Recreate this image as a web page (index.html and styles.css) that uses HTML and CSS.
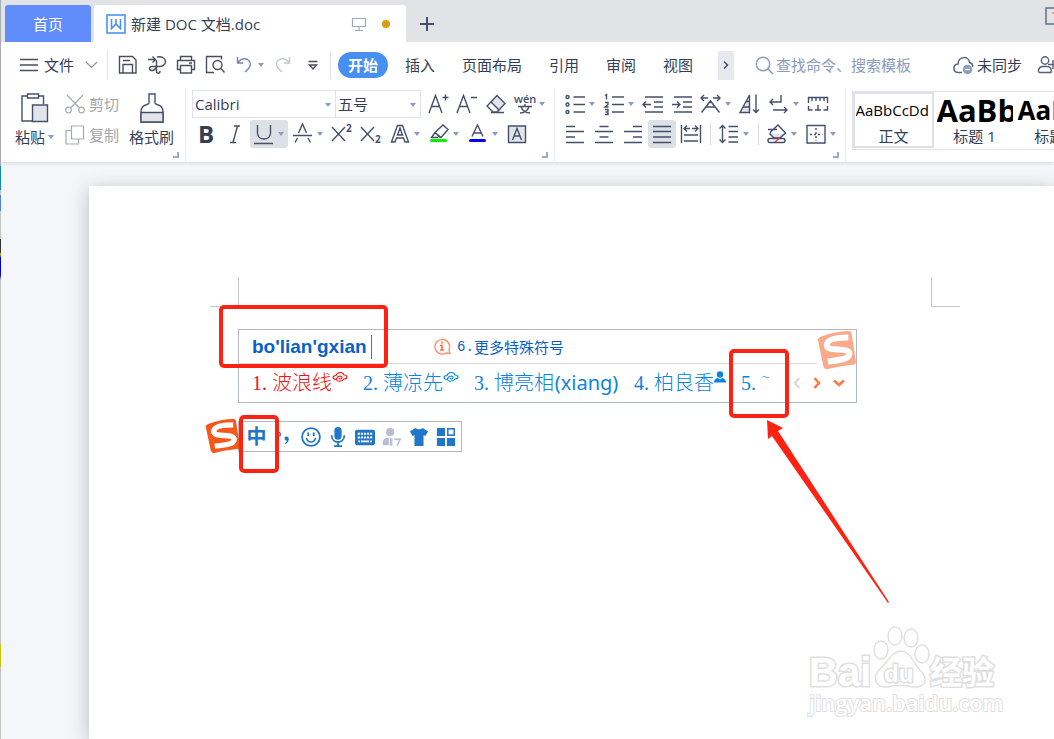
FILE: index.html
```html
<!DOCTYPE html>
<html lang="zh-CN">
<head>
    <meta charset="UTF-8">
    <meta name="viewport" content="width=device-width, initial-scale=1.0">
    <title>新建 DOC 文档.doc</title>
    <link rel="stylesheet" href="styles.css">
</head>
<body>
    <div class="window">
        <div class="desktop-edge"></div>

        <!-- document tabs -->
        <header class="tab-bar">
            <button class="home-tab">首页</button>
            <div class="doc-tab">
                <svg class="doc-logo" width="20" height="20" viewBox="0 0 20 20"><rect x="1" y="1" width="18" height="18" fill="#fff" stroke="#4b93f0" stroke-width="1.6"/><path d="M5.500 5v9.500L10 10l4.500 4.500V5M10 5v5" fill="none" stroke="#4b93f0" stroke-width="1.6"/></svg>
                <span class="doc-name">新建 DOC 文档.doc</span>
                <svg class="monitor" width="16" height="16" viewBox="0 0 16 16"><path d="M1.500 2.500h13v8h-13zM8 11v3M4 14.500h8" fill="none" stroke="#9aa9c4" stroke-width="1.2"/></svg>
                <span class="unsaved-dot"></span>
            </div>
            <button class="new-tab" aria-label="新建"><svg width="16" height="16" viewBox="0 0 16 16"><path d="M8 1v14M1 8h14" stroke="#44506b" stroke-width="2"/></svg></button>
            <button class="layout-button" aria-label="布局"><svg width="18" height="18" viewBox="0 0 18 18"><rect x="1" y="1" width="16" height="16" fill="none" stroke="#5a6782" stroke-width="1.4"/><path d="M7 6h5v6" fill="none" stroke="#e8926a" stroke-width="1.4"/></svg></button>
        </header>

        <!-- menu -->
        <nav class="menu-bar">
            <button class="file-menu">
                <svg width="19" height="14" viewBox="0 0 19 14"><path d="M0 1.500h18M0 7h18M0 12.500h18" stroke="#4a4f5c" stroke-width="1.3"/></svg>
                <span>文件</span>
                <svg width="13" height="8" viewBox="0 0 13 8"><path d="M1 1l5.500 5.500L12 1" fill="none" stroke="#8d929c" stroke-width="1.2"/></svg>
            </button>
            <div class="quick-access">
                <button class="tool dark" aria-label="保存"><svg viewBox="0 0 28 28"><path d="M5.500 5.500h13l3.500 3.500v13h-16.500zM9 22v-8.500h9.500V22M9 9.500h7"/></svg></button>
                <button class="tool dark" aria-label="输出为PDF"><svg viewBox="0 0 28 28"><path d="M5 8.500h7.500M9.500 5.500l3 3-3 3M14 6c5-1 8.500 1.500 8.500 4.500S19 16 15.500 15.500h-6c-4 0-4 4-.5 4 2 0 3-1 4-2.500M13.500 9v11c0 3 3.500 3 3.500 0"/></svg></button>
                <button class="tool dark" aria-label="打印"><svg viewBox="0 0 28 28"><path d="M8.500 9.500V5.500h11v4M8.500 18.500h-3v-9h17v9h-3M8.500 14.500h11v7.500h-11zM17 12h3"/></svg></button>
                <button class="tool dark" aria-label="打印预览"><svg viewBox="0 0 28 28"><path d="M13 21.500H5.500V5.500h15v3M20 17.500l3.500 4"/><circle cx="16.500" cy="14" r="4.500"/></svg></button>
                <button class="tool with-caret blue" aria-label="撤消"><svg viewBox="0 0 28 28"><path d="M7.500 6v6H13M7.500 12c3-4 7-5 10-3.500 5 3 3 8.500-2.500 12.500"/></svg></button>
                <button class="tool faded" aria-label="恢复"><svg viewBox="0 0 28 28"><path d="M20.500 6v6H15M20.500 12c-3-4-7-5-10-3.500-5 3-3 8.500 2.500 12.500"/></svg></button>
                <button class="tool dark" aria-label="更多"><svg viewBox="0 0 28 28"><path d="M10.500 10.500h9M11.500 14h7L15 18z"/></svg></button>
            </div>
            <div class="menu-tabs">
                <a class="menu-tab active" href="#">开始</a>
                <a class="menu-tab" href="#">插入</a>
                <a class="menu-tab" href="#">页面布局</a>
                <a class="menu-tab" href="#">引用</a>
                <a class="menu-tab" href="#">审阅</a>
                <a class="menu-tab" href="#">视图</a>
            </div>
            <button class="scroll-tabs" aria-label="更多选项卡"><svg width="6" height="10" viewBox="0 0 6 10"><path d="M1 1.500L4.500 5 1 8.500" fill="none" stroke="#44506b" stroke-width="1.5"/></svg></button>
            <label class="search">
                <svg width="19" height="19" viewBox="0 0 19 19"><path d="M13 13l5 5" stroke="#8a9bbd" stroke-width="1.4"/><circle cx="8" cy="8" r="6.700" fill="none" stroke="#8a9bbd" stroke-width="1.4"/></svg>
                <input type="text" placeholder="查找命令、搜索模板" aria-label="查找命令">
            </label>
            <button class="sync">
                <svg width="21" height="19" viewBox="0 0 21 19"><path d="M9 16.500H5C-.5 16-.5 8.500 5 8 5.500-.5 16 0 16.500 6.500c2.500.8 3.500 2.500 3 4.500" fill="none" stroke="#55617b" stroke-width="1.5"/><circle cx="14.500" cy="13.500" r="4.700" fill="#8a9bbd"/><path d="M12 13.500h5" stroke="#fff" stroke-width="1.3"/></svg>
                <span>未同步</span>
            </button>
            <button class="share" aria-label="协作"><svg width="22" height="18" viewBox="0 0 22 18"><circle cx="8" cy="4.500" r="3.700"/><path d="M14 16.500H2.500c-2-1-1-6 3.500-6h4c3 0 5 2 4 6zM11 8.500h10M16 4v9"/></svg></button>
        </nav>

        <!-- ribbon -->
        <section class="ribbon">
            <div class="group clipboard">
                <button class="big-tool">
                    <svg width="28" height="30" viewBox="0 0 28 30"><path d="M6.500 3H1v25h10M18 3h4.500v8M6.500 1h11v4h-11z"/><path class="shade" d="M11.500 12h15v16.500h-15z"/></svg>
                    <span class="caret-label">粘贴</span>
                </button>
                <div class="small-tools">
                    <button class="small-tool">
                        <svg width="20" height="20" viewBox="0 0 20 20"><circle cx="3.500" cy="16" r="2.800"/><circle cx="16.500" cy="16" r="2.800"/><path d="M2 1l12.500 13M18 1L5.500 14"/></svg>
                        <span>剪切</span>
                    </button>
                    <button class="small-tool">
                        <svg width="20" height="20" viewBox="0 0 20 20"><path d="M6.500 1h12v13h-12z"/><path d="M6 5.500H1V19h12.500v-5" fill="none"/></svg>
                        <span>复制</span>
                    </button>
                </div>
                <button class="big-tool">
                    <svg width="24" height="30" viewBox="0 0 24 30"><path d="M9 1h6v9c1 3 7 0 8 8v11H1V18c1-8 7-5 8-8z"/><path class="shade" d="M1 19.500h22V29H1z"/></svg>
                    <span>格式刷</span>
                </button>
                <span class="launcher"></span>
            </div>

            <div class="group font-group">
                <div class="tool-row">
                    <span class="combo font-name"><select aria-label="字体"><option>Calibri</option></select></span>
                    <span class="combo font-size"><select aria-label="字号"><option>五号</option></select></span>
                    <button class="tool" aria-label="增大字号"><svg viewBox="0 0 28 28"><path d="M5 23L11.500 5.500 18 23M7.500 16.500h8M18.500 7.500h6M21.500 4.500v6"/></svg></button>
                    <button class="tool" aria-label="减小字号"><svg viewBox="0 0 28 28"><path d="M4 23L10.500 5.500 17 23M6.500 16.500h8M18 7.500h6"/></svg></button>
                    <button class="tool" aria-label="清除格式"><svg viewBox="0 0 28 28"><path class="shade" d="M9 12l6-6.500 8 8-6 6.500z"/><path d="M9 12l-4 4 6 6h4l2-2M9 22.500h13"/></svg></button>
                    <button class="tool with-caret" aria-label="拼音指南"><svg viewBox="0 0 28 28"><text x="3" y="13" class="pinyin-text">wén</text><path d="M7 16.500h14M14 14v2.500M9 23c4 0 8-2.500 9-6.500M10 16.500c1 4 5 6.500 9 6.500"/></svg></button>
                </div>
                <div class="tool-row">
                    <button class="tool bold" aria-label="加粗">B</button>
                    <button class="tool" aria-label="倾斜"><svg viewBox="0 0 28 28"><path d="M13 6h6M9 22.500h6M16.500 6L12 22.500"/></svg></button>
                    <button class="tool with-caret pressed" aria-label="下划线"><svg viewBox="0 0 28 28"><path d="M7.500 5v8c0 8 13 8 13 0V5M4 23.500h19"/></svg></button>
                    <button class="tool with-caret" aria-label="删除线"><svg viewBox="0 0 28 28"><path d="M9.500 13L13.500 4l4 9M4 15.500h19M8.500 18L6 22.500M19 18l2.500 4.500"/></svg></button>
                    <button class="tool" aria-label="上标"><svg viewBox="0 0 28 28"><path d="M4 7l13 14M17 7L4 21"/><text x="18" y="12" class="index-text">2</text></svg></button>
                    <button class="tool" aria-label="下标"><svg viewBox="0 0 28 28"><path d="M4 7l13 14M17 7L4 21"/><text x="18" y="23" class="index-text">2</text></svg></button>
                    <button class="tool with-caret" aria-label="文字效果"><svg viewBox="0 0 28 28"><path d="M5.500 22l6-16.500h5l6 16.500h-3.500l-1.500-4h-7l-1.500 4zM11.500 15h5L14 8z"/></svg></button>
                    <button class="tool with-caret" aria-label="突出显示"><svg viewBox="0 0 28 28"><path d="M10 12.500L18 5l5 4.500-7 8zM10 12.500l-3.500 5h6.500M10 12.500l5 5"/><path d="M6.500 20.500h14" stroke="#00f000" stroke-width="3" stroke-linecap="round"/></svg></button>
                    <button class="tool with-caret" aria-label="字体颜色"><svg viewBox="0 0 28 28"><path d="M8 16.500L13.500 5 19 16.500M10 13h7"/><path d="M6.500 20.500h14" stroke="#0000ff" stroke-width="3" stroke-linecap="round"/></svg></button>
                    <button class="tool" aria-label="字符底纹"><svg viewBox="0 0 28 28"><path class="shade" d="M5.500 6h17v16.500h-17z"/><path d="M9.500 20l4.500-11.500L18.500 20M11 16h6"/></svg></button>
                </div>
                <span class="launcher"></span>
            </div>

            <div class="group paragraph-group">
                <div class="tool-row">
                    <button class="tool with-caret" aria-label="项目符号"><svg viewBox="0 0 28 28"><path d="M12.500 7H24M12.500 14.500H24M12.500 22H24"/><circle cx="6.500" cy="7" r="1.500"/><circle cx="6.500" cy="14.500" r="1.500"/><circle cx="6.500" cy="22" r="1.500"/></svg></button>
                    <button class="tool with-caret" aria-label="编号"><svg viewBox="0 0 28 28"><path d="M12 7h12M12 14.500h12M12 22h12M5 5.500l1.500-1v5M5 12.500h3v2L5 17h3.500M5 19.500h3v5H5M5.500 22H8"/></svg></button>
                    <button class="tool" aria-label="减少缩进"><svg viewBox="0 0 28 28"><path d="M6 7h18M15 12h9M15 17h9M6 22h18M12 14.500H4M7 11.500l-3 3 3 3"/></svg></button>
                    <button class="tool" aria-label="增加缩进"><svg viewBox="0 0 28 28"><path d="M6 7h18M15 12h9M15 17h9M6 22h18M4 14.500h8M9 11.500l3 3-3 3"/></svg></button>
                    <button class="tool with-caret" aria-label="中文版式"><svg viewBox="0 0 28 28"><path d="M4 8h7M7 5L4 8l3 3M16 8h7M20 5l3 3-3 3M4.500 22.500L13.500 11l9 11.500M9.500 17h8"/></svg></button>
                    <button class="tool" aria-label="排序"><svg viewBox="0 0 28 28"><path class="shade" d="M4 22.500L13.500 5v17.500z"/><path d="M10 11.500h3.500M7 17h6.500M20 4.500v18M17 19.500l3 3 3-3"/></svg></button>
                    <button class="tool with-caret" aria-label="显示段落标记"><svg viewBox="0 0 28 28"><path d="M16 5v7H5M8 9l-3 3 3 3M8 20h14M19 17l3 3-3 3"/></svg></button>
                    <button class="tool" aria-label="标尺"><svg viewBox="0 0 28 28"><path d="M4.500 13V7.500h19V13M8 8v3M12 8v3M16 8v3M20 8v3M4.500 16v4h4M23.500 16v4h-4M14 15v5M11 20h6"/></svg></button>
                </div>
                <div class="tool-row">
                    <button class="tool" aria-label="左对齐"><svg viewBox="0 0 28 28"><path d="M5 6.500h9M5 11.500h18M5 17h9M5 22.500h18"/></svg></button>
                    <button class="tool" aria-label="居中"><svg viewBox="0 0 28 28"><path d="M9.500 6.500h9M5 11.500h18M9.500 17h9M5 22.500h18"/></svg></button>
                    <button class="tool" aria-label="右对齐"><svg viewBox="0 0 28 28"><path d="M14 6.500h9M5 11.500h18M14 17h9M5 22.500h18"/></svg></button>
                    <button class="tool pressed" aria-label="两端对齐"><svg viewBox="0 0 28 28"><path d="M5 6.500h18M5 11.500h18M5 17h18M5 22.500h18"/></svg></button>
                    <button class="tool" aria-label="分散对齐"><svg viewBox="0 0 28 28"><path d="M4.500 5v18M23.500 5v18M7 15h14M7 21h14M7.500 8.500H13M10 5.500l-3 3 3 3M15 8.500h6M18 5.500l3 3-3 3"/></svg></button>
                    <span class="divider"></span>
                    <button class="tool with-caret" aria-label="行距"><svg viewBox="0 0 28 28"><path d="M7.500 5.500v17M4.500 8.500l3-3 3 3M4.500 19.500l3 3 3-3M13.500 6.500H23M13.500 11.500H23M13.500 17H23M13.500 22H23"/></svg></button>
                    <span class="divider"></span>
                    <button class="tool with-caret" aria-label="底纹颜色"><svg viewBox="0 0 28 28"><path class="shade" d="M8 14h14l-5 4h-6z" stroke="none"/><path d="M5 9.500h9M8 11.500L15 5l7.500 8-5.500 5h-6l-4-4z"/><rect x="5" y="18.500" width="17" height="4" rx="2" fill="#fff"/><path d="M12 22l4-3.500" stroke="#e33"/></svg></button>
                    <button class="tool with-caret" aria-label="边框"><svg viewBox="0 0 28 28"><path d="M5 5.500h18v17.500H5z"/><path d="M14 8v12.500M8 14.500h12.500" stroke-dasharray="2 2"/></svg></button>
                </div>
                <span class="launcher"></span>
            </div>

            <div class="styles-gallery">
                <button class="style-card selected"><span class="sample">AaBbCcDd</span><span>正文</span></button>
                <button class="style-card"><span class="sample heading-one">AaBb</span><span>标题 1</span></button>
                <button class="style-card"><span class="sample heading-two">AaBb</span><span>标题 2</span></button>
            </div>
        </section>

        <!-- document area -->
        <main class="workspace">
            <div class="page">
                <span class="crop-mark crop-left"></span>
                <span class="crop-mark crop-right"></span>

                <div class="ime-window">
                    <div class="ime-input">
                        <span class="pinyin">bo'lian'gxian</span>
                        <button class="more-symbols">
                            <svg width="18" height="17" viewBox="0 0 18 17"><path d="M13 15a7.300 7.300 0 1 1 3-3.500l1 4z" fill="none" stroke="#ff8a66" stroke-width="1.300"/><path d="M9 3.500v2M7 7.500h2v4.500M7 12h4" fill="none" stroke="#ff7043" stroke-width="1.700"/></svg>
                            <span class="num">6.</span><span>更多特殊符号</span>
                        </button>
                    </div>
                    <div class="candidates">
                        <button class="candidate first"><span class="num">1.</span>波浪线<svg class="mark" width="16" height="12" viewBox="0 0 16 12"><path d="M4 8.500C0 8 0 5 4 4.500 5 .5 11 .5 12 4c4 0 4 4 0 4-2 3-7 3-7.500.5C4.500 5 10 4 10 6.500c0 2-3 2-3 .5"/></svg></button>
                        <button class="candidate"><span class="num">2.</span>薄凉先<svg class="mark" width="16" height="12" viewBox="0 0 16 12"><path d="M4 8.500C0 8 0 5 4 4.500 5 .5 11 .5 12 4c4 0 4 4 0 4-2 3-7 3-7.500.5C4.500 5 10 4 10 6.500c0 2-3 2-3 .5"/></svg></button>
                        <button class="candidate"><span class="num">3.</span>博亮相<span class="reading">(xiang)</span></button>
                        <button class="candidate"><span class="num">4.</span>柏良香<svg class="mark person" width="12" height="12" viewBox="0 0 12 12"><circle cx="6" cy="3.500" r="3.200"/><path d="M0 11.500c0-4 3-4 4-4.500l2 1.500L8 7c1 .5 4 .5 4 4.500z"/></svg></button>
                        <button class="candidate"><span class="num">5.</span><span class="tilde">~</span></button>
                        <div class="pager">
                            <svg width="8" height="12" viewBox="0 0 8 12"><path d="M6.500 1L2 6l4.500 5" stroke="#dcdcdc"/></svg>
                            <svg width="8" height="12" viewBox="0 0 8 12"><path d="M1.500 1L6 6l-4.500 5" stroke="#ff7a45"/></svg>
                            <svg width="12" height="8" viewBox="0 0 12 8"><path d="M1 1.500L6 6l5-4.500" stroke="#ff7a45"/></svg>
                        </div>
                    </div>
                    <svg class="sogou-logo faded-logo" viewBox="0 0 36 36"><path d="M4 6C12 3 21 1 29 1c2 0 3 1 3 3l4 25c0 2-1 3-3 3-8 1-15 2-23 4-2 0-3 0-4-2L1 10c-1-2 1-3 3-4z" fill="#f4581a"/><path d="M29 7c-9 0-20 1-20 7 0 7 21 1 21 8 0 5-10 6-20 7" fill="none" stroke="#fff" stroke-width="5.500"/></svg>
                </div>

                <div class="ime-bar">
                    <svg class="sogou-logo bar-logo" viewBox="0 0 36 36"><path d="M4 6C12 3 21 1 29 1c2 0 3 1 3 3l4 25c0 2-1 3-3 3-8 1-15 2-23 4-2 0-3 0-4-2L1 10c-1-2 1-3 3-4z" fill="#f4581a"/><path d="M29 7c-9 0-20 1-20 7 0 7 21 1 21 8 0 5-10 6-20 7" fill="none" stroke="#fff" stroke-width="5.500"/></svg>
                    <button class="ime-tool ime-mode">中</button>
                    <button class="ime-tool" aria-label="标点"><svg viewBox="0 0 22 22"><circle cx="5" cy="8" r="2" fill="none" stroke="#2077c9" stroke-width="1.500"/><path d="M12 11c4-2 7 3 1 8l-1-1c2-2 2-3 2-3-2 0-3-2-2-4z"/></svg></button>
                    <button class="ime-tool" aria-label="表情"><svg viewBox="0 0 22 22"><circle cx="11" cy="11" r="9.800" fill="none" stroke="#2077c9" stroke-width="2"/><path d="M7 6h2v4H7zM13 6h2v4h-2z"/><path d="M6 12c1 6 9 6 10 0" fill="none" stroke="#2077c9" stroke-width="1.700"/></svg></button>
                    <button class="ime-tool" aria-label="语音"><svg viewBox="0 0 22 22"><rect x="7" y="0" width="8" height="14" rx="4"/><path d="M4 9c0 10 14 10 14 0M11 17v4M6.500 21h9" fill="none" stroke="#2077c9" stroke-width="2"/></svg></button>
                    <button class="ime-tool" aria-label="软键盘"><svg viewBox="0 0 22 22"><rect x="0" y="3" width="22" height="17" rx="2"/><path d="M3 7.500h16M3 11.500h16" stroke="#fff" stroke-width="2.200" stroke-dasharray="2.400 1"/><path d="M3.500 15.800h15" stroke="#fff" stroke-width="2" stroke-dasharray="2 1 9 1"/></svg></button>
                    <button class="ime-tool muted" aria-label="登录"><svg viewBox="0 0 22 22"><circle cx="9" cy="5.500" r="4.500"/><path d="M1 20c-1-7 2-9 9-8v8z"/><path d="M8 12h4v9H8zM13 12h9l-4 9h-3l3-6h-5z" stroke="#fff" stroke-width="1"/></svg></button>
                    <button class="ime-tool" aria-label="皮肤"><svg viewBox="0 0 22 22"><path d="M7 1c2 2 6 2 8 0l6 4-3 5-2-1v12H6V9l-2 1-3-5z"/></svg></button>
                    <button class="ime-tool" aria-label="工具箱"><svg viewBox="0 0 22 22"><path d="M1 1h9v9H1zM1 12h9v9H1zM12 12h9v9h-9z"/><rect x="13" y="2" width="7" height="7" fill="none" stroke="#2077c9" stroke-width="1.700"/></svg></button>
                </div>

                <!-- highlights over the input method -->
                <span class="highlight highlight-input"></span>
                <span class="highlight highlight-candidate"></span>
                <span class="highlight highlight-mode"></span>
                <svg class="arrow" width="126" height="186" viewBox="0 0 126 186"><path d="M1 1l16 8-5 3 111 171-1 1L6 17l-4 3z" fill="#ff2212"/></svg>

                <svg class="watermark" width="196" height="96" viewBox="0 0 196 96">
                    <g class="paw">
                        <ellipse cx="74" cy="26" rx="7" ry="9"/><ellipse cx="88" cy="12" rx="7" ry="9"/><ellipse cx="104" cy="14" rx="7" ry="9"/><ellipse cx="115" cy="30" rx="7" ry="9"/>
                        <path d="M94 27c9 0 11 10 18 18 11 10 6 19-6 18-9-2-17-2-25 0-12 1-17-8-8-18 9-8 12-18 21-18z"/>
                    </g>
                    <text x="2" y="62" class="mark-latin">Bai</text>
                    <text x="77" y="58" class="mark-du">du</text>
                    <text x="123" y="60" class="mark-cjk">经验</text>
                    <text x="2" y="87" class="mark-url">jingyan.baidu.com</text>
                </svg>
            </div>
        </main>
    </div>
</body>
</html>
```
FILE: styles.css
```css
* {
    box-sizing: border-box;
}

body {
    margin: 0;
    font-family: "Open Sans", "Noto Sans CJK SC", sans-serif;
    font-size: 15px;
    line-height: 20px;
    color: #333e56;
}

button {
    padding: 0;
    border: none;
    background: none;
    font: inherit;
    color: inherit;
    cursor: pointer;
}

a {
    color: inherit;
    text-decoration: none;
}

svg {
    display: block;
    flex-shrink: 0;
}

.window {
    position: relative;
    display: flex;
    flex-direction: column;
    min-height: 100vh;
    overflow: hidden;
    background-color: #fff;
}

.desktop-edge {
    position: absolute;
    top: 0;
    bottom: 0;
    left: 0;
    z-index: 3;
    width: 1px;
    background: linear-gradient(#a9abb2 166px, #0d8ab5 166px, #0d8ab5 190px, #c4c4c4 190px, #c4c4c4 195px, #4b85cc 195px, #4b85cc 211px, #c4c4c4 211px, #c4c4c4 239px, #333 239px, #333 252px, #c8c000 254px, #0000c8 258px, #0000c8 275px, #c4c4c4 280px, #c4c4c4 644px, #cdc300 644px, #cdc300 667px, #c4c4c4 667px);
}

/* tabs */
.tab-bar {
    display: flex;
    height: 42px;
    padding: 5px 0 0 5px;
    background-color: #e2e3e7;
}

.home-tab {
    width: 86px;
    margin-right: 3px;
    border-radius: 3px 3px 0 0;
    background-color: #618dfa;
    color: #fff;
}

.doc-tab {
    display: flex;
    align-items: center;
    width: 312px;
    padding: 0 16px 0 12px;
    border-radius: 3px 3px 0 0;
    background-color: #fff;
}

.doc-name {
    margin-left: 5px;
}

.monitor {
    margin-left: auto;
}

.unsaved-dot {
    width: 8px;
    height: 8px;
    margin-left: 15px;
    border-radius: 50%;
    background-color: #dd9a10;
}

.new-tab {
    padding: 0 13px;
}

.layout-button {
    align-self: flex-start;
    margin: 2px -9px 0 auto;
}

/* menu */
.menu-bar {
    display: flex;
    align-items: center;
    height: 46px;
    white-space: nowrap;
}

.menu-bar > * {
    flex-shrink: 0;
}

.file-menu {
    display: flex;
    align-items: center;
    width: 108px;
    height: 30px;
    padding-left: 20px;
    border-right: 1px solid #e0e2e6;
    gap: 5px;
}

.file-menu span {
    width: 36px;
    text-align: left;
}

.quick-access {
    display: flex;
    width: 223px;
    padding-left: 6px;
    border-right: 1px solid #e0e2e6;
}

.menu-tabs {
    display: flex;
    align-items: center;
    width: 387px;
    padding-left: 7px;
    gap: 27px;
}

.menu-tab.active {
    margin-right: -10px;
    padding: 3px 10px;
    border-radius: 13px;
    background-color: #478ff3;
    color: #fff;
    font-weight: bold;
}

.scroll-tabs {
    display: flex;
    align-items: center;
    justify-content: center;
    width: 16px;
    height: 29px;
    background-color: #e6e9ee;
}

.search {
    display: flex;
    align-items: center;
    width: 198px;
    margin-left: 21px;
    gap: 2px;
}

.search input {
    width: 150px;
    padding: 0;
    border: none;
    outline: none;
    font: inherit;
}

.search input::placeholder {
    color: #8a9bbd;
    opacity: 1;
}

.sync {
    display: flex;
    align-items: center;
    width: 84px;
    gap: 3px;
}

.share svg {
    fill: none;
    stroke: #55617b;
    stroke-width: 1.4;
}

/* tool buttons */
.tool {
    position: relative;
    width: 28px;
    height: 28px;
    margin-right: 1px;
    border-radius: 3px;
}

.tool svg {
    width: 28px;
    height: 28px;
    fill: none;
    stroke: #44506b;
    stroke-width: 1.4;
}

.with-caret {
    display: flex;
    align-items: center;
    width: 38px;
}

.with-caret::after,
.caret-label::after {
    content: "";
    border: 3px solid transparent;
    border-top: 4px solid #8a9bbd;
    border-bottom: none;
}

.pressed {
    background-color: #dce1e6;
}

.dark svg {
    stroke: #4a4f5c;
}

.faded svg {
    stroke: #c3c6cc;
}

.blue svg {
    stroke: #7587a8;
}

svg .shade {
    fill: #e2e4e9;
}

.bold {
    font-size: 24px;
    font-weight: bold;
}

.tool text {
    fill: #44506b;
    stroke: none;
}

.pinyin-text {
    font-size: 11px;
    font-weight: 600;
}

.index-text {
    font-size: 10px;
    font-weight: bold;
}

/* ribbon */
.ribbon {
    position: relative;
    z-index: 2;
    display: flex;
    height: 74px;
    box-shadow: 0 3px 3px -1px #dcdee2;
    background-color: #fff;
}

.group {
    position: relative;
    flex-shrink: 0;
    padding-top: 2px;
    border-right: 1px solid #eceef1;
}

.clipboard {
    display: flex;
    width: 186px;
    padding-left: 15px;
}

.font-group {
    width: 369px;
    padding-left: 6px;
}

.paragraph-group {
    width: 291px;
    padding-left: 6px;
}

.launcher {
    position: absolute;
    right: 6px;
    bottom: 4px;
    width: 6px;
    height: 6px;
    border: solid #9eabc2;
    border-width: 0 2px 2px 0;
}

.tool-row {
    display: flex;
    align-items: center;
    height: 28px;
    margin-bottom: 2px;
}

.big-tool {
    display: flex;
    flex-direction: column;
    align-items: center;
    padding-top: 3px;
    gap: 4px;
    white-space: nowrap;
}

.big-tool svg {
    fill: none;
    stroke: #44506b;
    stroke-width: 1.4;
}

.caret-label {
    display: flex;
    align-items: center;
    gap: 3px;
}

.small-tools {
    display: flex;
    flex-direction: column;
    width: 64px;
    margin: 4px 0 0 14px;
    gap: 11px;
    color: #a3a5a9;
}

.small-tools + .big-tool {
    margin-left: -3px;
}

.small-tool {
    display: flex;
    align-items: center;
    gap: 4px;
    margin-left: -3px;
    white-space: nowrap;
}

.small-tool svg {
    fill: #fff;
    stroke: #a9abaf;
    stroke-width: 1.2;
}

.combo {
    position: relative;
    height: 28px;
    border: 1px solid #dfe2e7;
}

.combo::after {
    content: "";
    position: absolute;
    top: 12px;
    right: 4px;
    border: 3px solid transparent;
    border-top: 4px solid #8a9bbd;
    border-bottom: none;
    pointer-events: none;
}

.font-name {
    width: 144px;
}

.font-size {
    width: 85px;
    margin-right: 3px;
    border-left: none;
}

.combo select {
    width: 100%;
    height: 26px;
    padding: 0 2px;
    border: none;
    outline: none;
    appearance: none;
    background: none;
    font: inherit;
    color: inherit;
}

.divider {
    width: 1px;
    height: 22px;
    margin: 0 4px;
    background-color: #d9dce1;
}

.styles-gallery {
    display: flex;
    flex-shrink: 0;
    height: 59px;
    margin: 3px 0 0 6px;
    border: 1px solid #e1e3e9;
}

.style-card {
    display: flex;
    flex-direction: column;
    align-items: center;
    width: 81px;
    height: 56px;
    border: 2px solid transparent;
    white-space: nowrap;
}

.style-card.selected {
    border-color: #dfe1e8;
}

.sample {
    width: 76px;
    height: 33px;
    overflow: hidden;
    color: #000;
    font-size: 15px;
    line-height: 33px;
    text-align: left;
}

.heading-one {
    font-size: 31px;
    font-weight: bold;
}

.heading-two {
    font-size: 26px;
    font-weight: bold;
}

/* document */
.workspace {
    display: flex;
    flex: 1;
    padding: 24px 0 0 89px;
    background-color: #f5f6f9;
}

.page {
    position: relative;
    flex: 1;
    min-height: 553px;
    box-shadow: 0 4px 18px #b9bbbe;
    background-color: #fff;
}

.crop-mark {
    position: absolute;
    top: 91px;
    width: 29px;
    height: 30px;
    border: 0 solid #c6c6c6;
    border-bottom-width: 1px;
}

.crop-left {
    left: 121px;
    border-right-width: 1px;
}

.crop-right {
    left: 842px;
    border-left-width: 1px;
}

/* input method candidates */
.ime-window {
    position: absolute;
    top: 143px;
    left: 149px;
    width: 619px;
    border: 1px solid #b3b7c0;
    background-color: #fff;
    color: #0a84e0;
}

.ime-input {
    display: flex;
    align-items: center;
    height: 34px;
    margin-right: 39px;
    padding-left: 13px;
    border-bottom: 1px solid #d8d8d8;
}

.pinyin {
    width: 120px;
    border-right: 1px solid #e33;
    color: #0a5fc8;
    font-family: "Liberation Sans", Arial, sans-serif;
    font-size: 19px;
    font-weight: bold;
    line-height: 24px;
}

.more-symbols {
    display: flex;
    align-items: center;
    margin-left: 61px;
    color: #0a5fc8;
}

.num {
    display: inline-block;
    width: 20px;
    font-family: "Liberation Mono", monospace;
    text-align: left;
}

.more-symbols .num {
    width: 17px;
    margin-left: 6px;
    font-size: 14px;
}

.candidates {
    display: flex;
    align-items: center;
    height: 38px;
    padding-left: 13px;
    gap: 15px;
}

.candidate {
    display: flex;
    font-size: 20px;
    font-weight: 300;
    line-height: 24px;
    white-space: nowrap;
}

.candidate .num {
    font-family: "Liberation Serif", serif;
}

.first {
    color: #f01414;
}

.mark {
    fill: none;
    stroke: currentColor;
    stroke-width: 1.1;
}

.person {
    fill: currentColor;
    stroke: none;
}

.reading {
    width: 65px;
    font-family: "Noto Sans", sans-serif;
    font-weight: normal;
}

.tilde {
    width: 20px;
    font-size: 16px;
    line-height: 12px;
    text-align: left;
}

.pager {
    display: flex;
    align-items: center;
    margin-left: -3px;
    gap: 12px;
}

.pager svg {
    fill: none;
    stroke-width: 2.6;
}

.sogou-logo {
    position: absolute;
}

.faded-logo {
    top: 0;
    right: 0;
    width: 39px;
    height: 39px;
    opacity: 0.5;
}

/* input method toolbar */
.ime-bar {
    position: absolute;
    top: 235px;
    left: 149px;
    display: flex;
    align-items: center;
    height: 31px;
    padding: 0 2px 0 4px;
    border: 1px solid #b3b7c0;
    background-color: #fff;
}

.bar-logo {
    top: -4px;
    left: -34px;
    width: 35px;
    height: 35px;
}

.ime-tool {
    display: flex;
    align-items: center;
    justify-content: center;
    width: 27px;
    height: 29px;
}

.ime-tool svg {
    width: 20px;
    height: 20px;
    fill: #2077c9;
}

.ime-tool.muted svg {
    fill: #b5bfd0;
}

.ime-mode {
    color: #2077c9;
    font-size: 20px;
    font-weight: bold;
}

/* highlights */
.highlight {
    position: absolute;
    border: 4px solid #ff2212;
    border-radius: 5px;
}

.highlight-input {
    top: 119px;
    left: 130px;
    width: 169px;
    height: 63px;
}

.highlight-candidate {
    top: 163px;
    left: 640px;
    width: 60px;
    height: 69px;
}

.highlight-mode {
    top: 229px;
    left: 150px;
    width: 40px;
    height: 58px;
}

.arrow {
    position: absolute;
    top: 233px;
    left: 677px;
}

/* watermark */
.watermark {
    position: absolute;
    top: 438px;
    left: 718px;
    fill: #fff;
    stroke: #e0e0e0;
    stroke-width: 1.5;
}

.watermark text {
    paint-order: stroke;
    stroke-width: 3;
    font-family: "Liberation Sans", "Noto Sans CJK SC", sans-serif;
    font-weight: bold;
}

.mark-latin {
    font-size: 40px;
}

.mark-du {
    font-size: 24px;
}

.mark-cjk {
    font-size: 32px;
}

.watermark .mark-url {
    stroke-width: 2;
    font-family: "Open Sans", sans-serif;
    font-size: 22px;
    font-weight: 600;
}
```
